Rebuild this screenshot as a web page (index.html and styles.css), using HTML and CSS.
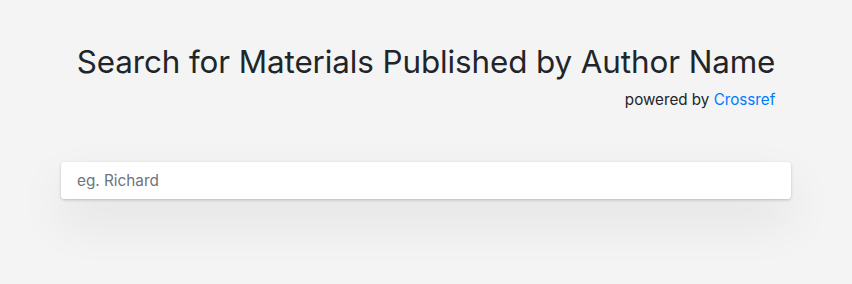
FILE: index.html
```html
<!DOCTYPE html>
<html lang="en">
<head>
  <meta charset="UTF-8" />
  <title>Author Search</title>
  <link rel="stylesheet" href="styles.css">
</head>
<body>
  <div class="page">
    <div class="header">
      <h1>Search for Materials Published by Author Name</h1>
      <p class="powered">powered by <a href="#">Crossref</a></p>
    </div>

    <div class="search-box">
      <input type="text" id="author" placeholder="eg. Richard" />
    </div>
  </div>
</body>
</html>
```

FILE: styles.css
```css
* {
  box-sizing: border-box;
}

html,
body {
  min-height: 100%;
}

body {
  margin: 0;
  background: #f4f4f4;
  font-family: Inter, 'Noto Sans', sans-serif;
  color: #212529;
}

.page {
  width: 730px;
  margin: 0 auto;
  padding: 42px 0 90px;
  display: flex;
  flex-direction: column;
  align-items: center;
}

.header {
  display: inline-block;
}

.header h1 {
  margin: 0;
  font-size: 31.4px;
  font-weight: 400;
  line-height: 40px;
  letter-spacing: -0.1px;
}

.powered {
  margin: 9px 0 0;
  text-align: right;
  font-size: 15.2px;
  line-height: 18px;
}

.powered a {
  color: #007bff;
  text-decoration: none;
}

.search-box {
  width: 100%;
  margin-top: 53px;
  border-radius: 4px;
  box-shadow: 0 1px 3px rgba(0, 0, 0, 0.22), 0 22px 50px rgba(0, 0, 0, 0.08);
}

.search-box input {
  display: block;
  width: 100%;
  height: 37px;
  padding: 0 16px;
  border: none;
  border-radius: 4px;
  background: #fff;
  font-family: inherit;
  font-size: 15.3px;
  color: #495057;
  outline: none;
}

.search-box input::placeholder {
  color: #6c757d;
}
```
